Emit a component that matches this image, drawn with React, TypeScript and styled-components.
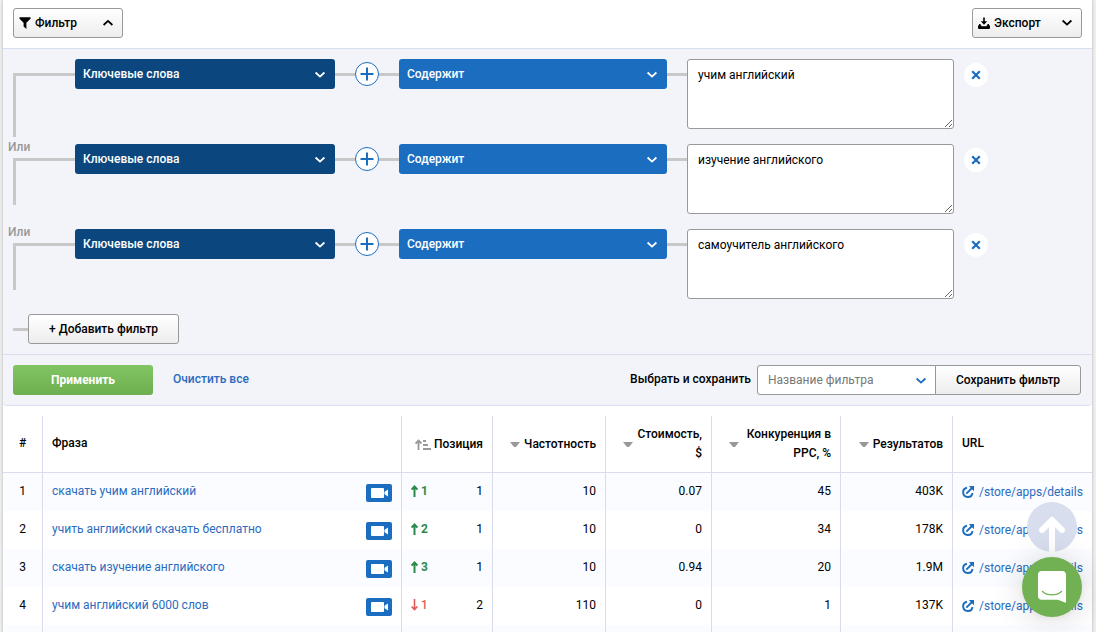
import React from 'react';
import styled, { createGlobalStyle, css } from 'styled-components';

const GlobalStyle = createGlobalStyle`
  *, *::before, *::after { box-sizing: border-box; }
  body {
    margin: 0;
    background: #efefef;
    color: #000;
    font: 400 12px/18px Roboto, "Liberation Sans", sans-serif;
  }
  button, select, textarea { font: inherit; color: inherit; margin: 0; }
  a { color: #2a6bbf; text-decoration: none; }
`;

const Page = styled.main`
  height: 100vh;
  overflow: hidden;
  padding: 0 4px 0 3px;
`;

const Panel = styled.div`
  min-height: 100vh;
  background: #fff;
  box-shadow: 0 0 3px rgba(0, 0, 0, 0.25);
`;

const Toolbar = styled.header`
  display: flex;
  justify-content: space-between;
  padding: 8px 10px 10px;
  border-bottom: 1px solid #d5dff0;
`;

const lightButton = css`
  height: 30px;
  border: 1px solid #999;
  border-radius: 3px;
  background: linear-gradient(#fff, #ededed);
  font-weight: 500;
`;

const ToolButton = styled.button`
  ${lightButton}
  display: flex;
  align-items: center;
  gap: 4px;
  width: 110px;
  padding: 0 8px 0 5px;

  svg:last-child { margin-left: auto; }
`;

const Filters = styled.section`
  background: #f3f4f9;
  padding-bottom: 10px;
  border-bottom: 1px solid #d5dff0;
`;

const FilterRow = styled.div`
  display: grid;
  grid-template-columns: 67px 260fr 64px 268fr 20px 267fr 34px;
  align-items: start;
  padding: 0 104px 0 5px;
`;

const Rail = styled.div<{ $first: boolean }>`
  height: ${(p) => (p.$first ? 80 : 85)}px;
  padding-top: ${(p) => (p.$first ? 24 : 10)}px;
`;

const OrLabel = styled.div`
  height: 15px;
  margin-bottom: 4px;
  line-height: 17px;
  font-weight: 500;
  color: #999;
`;

const Bracket = styled.div<{ $long: boolean }>`
  height: ${(p) => (p.$long ? 64 : 47)}px;
  margin-left: 5px;
  border: solid #c8c8c8;
  border-width: 3px 0 0 3px;
`;

const Slot = styled.div<{ $first: boolean }>`
  padding-top: ${(p) => (p.$first ? 10 : 15)}px;
`;

const SelectBox = styled.div`
  position: relative;

  svg {
    position: absolute;
    right: 9px;
    top: 12px;
    pointer-events: none;
  }
`;

const FilterSelect = styled.select<{ $dark?: boolean }>`
  display: block;
  appearance: none;
  width: 100%;
  height: 30px;
  padding: 0 30px 0 8px;
  border: 0;
  border-radius: 3px;
  background: ${(p) => (p.$dark ? '#0b467e' : '#1b6dc0')};
  color: #fff;
  font-weight: 500;
`;

const Joint = styled.div`
  display: flex;
  align-items: center;
  height: 30px;

  &::before, &:not(:empty)::after {
    content: '';
    flex: 1;
    height: 3px;
    background: #c8c8c8;
  }
`;

const RoundButton = styled.button<{ $outlined?: boolean }>`
  display: grid;
  place-items: center;
  width: 24px;
  height: 24px;
  padding: 0;
  border: ${(p) => (p.$outlined ? '1px solid #1b6dc0' : '0')};
  border-radius: 50%;
  background: #fff;
  color: #1b6dc0;
`;

const RemoveSlot = styled.div`
  padding: 4px 0 0 10px;
`;

const Words = styled.textarea`
  display: block;
  width: 100%;
  height: 70px;
  padding: 6px 10px;
  border: 1px solid #999;
  border-radius: 3px;
  background: #fff;
  resize: both;
`;

const AddRow = styled.div`
  display: flex;
  align-items: center;
  padding: 15px 10px 0;

  &::before {
    content: '';
    width: 15px;
    height: 3px;
    background: #c8c8c8;
  }
`;

const AddButton = styled.button`
  ${lightButton}
  padding: 0 20px;
`;

const Actions = styled.section`
  display: flex;
  align-items: center;
  padding: 10px 11px 10px 10px;
  background: #f3f4f9;
  border-bottom: 1px solid #d5dff0;
  border-radius: 0 0 4px 4px;
`;

const ApplyButton = styled.button`
  width: 140px;
  height: 30px;
  border: 0;
  border-radius: 3px;
  background: linear-gradient(#80c564, #6fae50);
  color: #fff;
  font-weight: 700;
`;

const ClearLink = styled.a`
  margin: 0 auto 0 20px;
  padding-bottom: 2px;
  font-weight: 500;
`;

const SaveLabel = styled.label`
  margin-right: 6px;
  padding-bottom: 2px;
  font-weight: 500;
`;

const PresetSelect = styled.select`
  display: block;
  appearance: none;
  width: 179px;
  height: 30px;
  padding: 0 30px 0 10px;
  border: 1px solid #999;
  border-radius: 3px 0 0 3px;
  background: #fff;
  color: #777;
`;

const SaveButton = styled.button`
  ${lightButton}
  width: 146px;
  margin-left: -1px;
  padding: 0;
  border-radius: 0 3px 3px 0;
`;

const Table = styled.table`
  width: 100%;
  margin-top: 10px;
  table-layout: fixed;
  border-collapse: separate;
  border-spacing: 0;
`;

const HeadCell = styled.th<{ $align?: 'left' | 'center' | 'right' }>`
  height: 57px;
  padding: ${(p) => (p.$align === 'right' ? '0 9px' : '0 9px 2px')};
  border-bottom: 1px solid #d8dcec;
  border-right: 1px solid #d8dcec;
  font-weight: 500;
  line-height: 19px;
  text-align: ${(p) => p.$align ?? 'left'};

  &:last-child { border-right: 0; }
`;

const SortHead = styled.div<{ $gap: number }>`
  display: flex;
  align-items: center;
  justify-content: flex-end;
  gap: ${(p) => p.$gap}px;

  svg { flex: none; }
`;

const Row = styled.tr`
  &:nth-child(odd) { background: #fafcff; }
`;

const Cell = styled.td<{ $align?: 'left' | 'center' | 'right' }>`
  height: 38px;
  padding: 9px 9px 0;
  vertical-align: top;
  border-right: 1px solid #d8dcec;
  white-space: nowrap;
  text-align: ${(p) => p.$align ?? 'right'};

  &:last-child { border-right: 0; }
`;

const Split = styled.div`
  display: flex;
  align-items: flex-start;
  justify-content: space-between;
`;

const VideoButton = styled.button`
  display: grid;
  place-items: center;
  width: 26px;
  height: 18px;
  margin-top: 2px;
  padding: 0;
  border: 0;
  border-radius: 2px;
  background: #1b6dc0;
`;

const Change = styled.span<{ $up: boolean }>`
  display: flex;
  align-items: center;
  gap: 3px;
  color: ${(p) => (p.$up ? '#2b8a4b' : '#dc5c5c')};
  font-weight: ${(p) => (p.$up ? 700 : 500)};
`;

const UrlLink = styled.a`
  display: flex;
  align-items: center;
  gap: 5px;
  margin-top: 1px;
`;

const TopButton = styled.button`
  position: fixed;
  right: 19px;
  bottom: 80px;
  width: 50px;
  height: 50px;
  padding: 0;
  border: 0;
  border-radius: 50%;
  overflow: hidden;
  background: #d8deed;
`;

const ChatButton = styled.button`
  position: fixed;
  right: 14px;
  bottom: 15px;
  display: grid;
  place-items: center;
  width: 60px;
  height: 60px;
  padding: 0;
  border: 0;
  border-radius: 50%;
  background: #71b153;
  box-shadow: 0 1px 6px rgba(0, 0, 0, 0.06), 0 2px 32px rgba(0, 0, 0, 0.16);
`;

const Chevron = ({ up, color = '#000' }: { up?: boolean; color?: string }) => (
  <svg width="12" height="8" viewBox="0 0 12 8" fill="none" stroke={color} strokeWidth="1.8" aria-hidden="true">
    <path d={up ? 'M1.600 6 6 1.900 10.400 6' : 'M1.600 1.500 6 5.600l4.400-4.100'} />
  </svg>
);

const FunnelIcon = () => (
  <svg width="12" height="12" viewBox="0 0 12 12" aria-hidden="true">
    <path d="M.5.300h11v1.500L7.400 5.800V12L4.600 9.500V5.800L.5 1.800z" />
  </svg>
);

const DownloadIcon = () => (
  <svg width="12" height="12" viewBox="0 0 12 12" aria-hidden="true">
    <path d="M5.200.5h1.600v3.800h2.400L6 7.800 2.800 4.300h2.400z" />
    <path d="M1.300 7h1L3.600 9.200h4.800L9.700 7h1L12 9.200V11a1 1 0 0 1-1 1H1a1 1 0 0 1-1-1V9.200z" />
  </svg>
);

const PlusIcon = () => (
  <svg width="14" height="14" viewBox="0 0 14 14" stroke="currentColor" strokeWidth="2" aria-hidden="true">
    <path d="M7 .5v13M.5 7h13" />
  </svg>
);

const CrossIcon = () => (
  <svg width="10" height="10" viewBox="0 0 10 10" stroke="currentColor" strokeWidth="2.200" aria-hidden="true">
    <path d="m1.200 1.200 7.600 7.600M8.800 1.200 1.200 8.800" />
  </svg>
);

const TriangleIcon = () => (
  <svg width="10" height="6" viewBox="0 0 10 6" fill="#999" aria-hidden="true">
    <path d="M0 1h10L6 6H4z" />
  </svg>
);

const SortIcon = () => (
  <svg width="16" height="11" viewBox="0 0 16 11" fill="none" stroke="#999" aria-hidden="true">
    <path strokeWidth="1.800" d="M3.500 11V1.500M.6 4.500l2.900-3 2.900 3" />
    <path strokeWidth="2" d="M8 2h3M8 6h5M8 10h8" />
  </svg>
);

const VideoIcon = () => (
  <svg width="18" height="10" viewBox="0 0 18 10" fill="#fff" aria-hidden="true">
    <rect x="1" width="13" height="10" rx="1" />
    <path d="M14.500 3.800 18 1.500v7l-3.500-2.300z" />
  </svg>
);

const ArrowIcon = ({ up }: { up: boolean }) => (
  <svg width="7" height="12" viewBox="0 0 7 12" fill="none" stroke="currentColor" strokeWidth={up ? 2 : 1.6} aria-hidden="true">
    <path d={up ? 'M3.500 12V1.500M.6 4.500l2.900-3 2.900 3' : 'M3.500 0v10.500M.6 7.500l2.900 3 2.900-3'} />
  </svg>
);

const ExternalIcon = () => (
  <svg width="12" height="12" viewBox="0 0 12 12" fill="none" stroke="#1b6dc0" strokeWidth="1.900" aria-hidden="true">
    <path d="M5 1.700A4.700 4.700 0 1 0 10.500 7" />
    <path d="M4.300 7.700 10 2" />
    <path d="M6.800 0H12v5.200z" fill="#1b6dc0" stroke="none" />
  </svg>
);

const TopIcon = () => (
  <svg width="50" height="50" viewBox="0 0 50 50" fill="none" stroke="#fff" strokeWidth="6" strokeLinecap="round" strokeLinejoin="round" aria-hidden="true">
    <path d="M25 53V19M15 28l10-10 10 10" />
  </svg>
);

const ChatIcon = () => (
  <svg width="28" height="32" viewBox="0 0 28 32" aria-hidden="true">
    <path fill="#fff" d="M28 32s-4.700-1.900-8.300-3.200H3.500C1.600 28.800 0 27.200 0 25.200V3.600C0 1.600 1.600 0 3.500 0h21C26.400 0 28 1.600 28 3.600z" />
    <path fill="none" stroke="#71b153" strokeWidth="1.400" strokeLinecap="round" d="M4.500 20.500c5 4.500 14 4.500 19 0" />
  </svg>
);

const filters = ['учим английский', 'изучение английского', 'самоучитель английского'];

const phrases = [
  { phrase: 'скачать учим английский', delta: 1, up: true, position: 1, volume: 10, cost: '0.07', competition: 45, results: '403K' },
  { phrase: 'учить английский скачать бесплатно', delta: 2, up: true, position: 1, volume: 10, cost: '0', competition: 34, results: '178K' },
  { phrase: 'скачать изучение английского', delta: 3, up: true, position: 1, volume: 10, cost: '0.94', competition: 20, results: '1.9M' },
  { phrase: 'учим английский 6000 слов', delta: 1, up: false, position: 2, volume: 110, cost: '0', competition: 1, results: '137K' },
];

const columnWidths = [40, undefined, 91, 113, 106, 129, 112, 139];

export default function App() {
  return (
    <>
      <GlobalStyle />
      <Page>
        <Panel>
          <Toolbar>
            <ToolButton type="button" aria-expanded="true">
              <FunnelIcon />
              Фильтр
              <Chevron up />
            </ToolButton>
            <ToolButton type="button">
              <DownloadIcon />
              Экспорт
              <Chevron />
            </ToolButton>
          </Toolbar>

          <Filters>
            {filters.map((text, i) => {
              const first = i === 0;
              return (
                <FilterRow key={text}>
                  <Rail $first={first}>
                    {!first && <OrLabel>Или</OrLabel>}
                    <Bracket $long={first} />
                  </Rail>
                  <Slot $first={first}>
                    <SelectBox>
                      <FilterSelect $dark aria-label="Поле">
                        <option>Ключевые слова</option>
                      </FilterSelect>
                      <Chevron color="#fff" />
                    </SelectBox>
                  </Slot>
                  <Slot $first={first}>
                    <Joint>
                      <RoundButton $outlined type="button" aria-label="Добавить условие">
                        <PlusIcon />
                      </RoundButton>
                    </Joint>
                  </Slot>
                  <Slot $first={first}>
                    <SelectBox>
                      <FilterSelect aria-label="Условие">
                        <option>Содержит</option>
                      </FilterSelect>
                      <Chevron color="#fff" />
                    </SelectBox>
                  </Slot>
                  <Slot $first={first}>
                    <Joint />
                  </Slot>
                  <Slot $first={first}>
                    <Words aria-label="Значение" defaultValue={text} spellCheck={false} />
                  </Slot>
                  <Slot $first={first}>
                    <RemoveSlot>
                      <RoundButton type="button" aria-label="Удалить">
                        <CrossIcon />
                      </RoundButton>
                    </RemoveSlot>
                  </Slot>
                </FilterRow>
              );
            })}
            <AddRow>
              <AddButton type="button">+ Добавить фильтр</AddButton>
            </AddRow>
          </Filters>

          <Actions>
            <ApplyButton type="button">Применить</ApplyButton>
            <ClearLink href="#clear">Очистить все</ClearLink>
            <SaveLabel htmlFor="preset">Выбрать и сохранить</SaveLabel>
            <SelectBox>
              <PresetSelect id="preset">
                <option>Название фильтра</option>
              </PresetSelect>
              <Chevron color="#1b6dc0" />
            </SelectBox>
            <SaveButton type="button">Сохранить фильтр</SaveButton>
          </Actions>

          <Table>
            <colgroup>
              {columnWidths.map((width, i) => (
                <col key={i} width={width} />
              ))}
            </colgroup>
            <thead>
              <tr>
                <HeadCell $align="center">#</HeadCell>
                <HeadCell>Фраза</HeadCell>
                <HeadCell $align="right"><SortHead $gap={3}><SortIcon />Позиция</SortHead></HeadCell>
                <HeadCell $align="right"><SortHead $gap={4}><TriangleIcon />Частотность</SortHead></HeadCell>
                <HeadCell $align="right"><SortHead $gap={4}><TriangleIcon /><span>Стоимость,<br />$</span></SortHead></HeadCell>
                <HeadCell $align="right"><SortHead $gap={8}><TriangleIcon /><span>Конкуренция в<br />PPC, %</span></SortHead></HeadCell>
                <HeadCell $align="right"><SortHead $gap={4}><TriangleIcon />Результатов</SortHead></HeadCell>
                <HeadCell>URL</HeadCell>
              </tr>
            </thead>
            <tbody>
              {phrases.map((item, i) => (
                <Row key={item.phrase}>
                  <Cell $align="center">{i + 1}</Cell>
                  <Cell>
                    <Split>
                      <a href="#phrase">{item.phrase}</a>
                      <VideoButton type="button" aria-label="Видео"><VideoIcon /></VideoButton>
                    </Split>
                  </Cell>
                  <Cell>
                    <Split>
                      <Change $up={item.up}><ArrowIcon up={item.up} />{item.delta}</Change>
                      {item.position}
                    </Split>
                  </Cell>
                  <Cell>{item.volume}</Cell>
                  <Cell>{item.cost}</Cell>
                  <Cell>{item.competition}</Cell>
                  <Cell>{item.results}</Cell>
                  <Cell>
                    <UrlLink href="#details"><ExternalIcon />/store/apps/details</UrlLink>
                  </Cell>
                </Row>
              ))}
              <Row>
                {columnWidths.map((_, i) => (
                  <Cell key={i} />
                ))}
              </Row>
            </tbody>
          </Table>
        </Panel>
      </Page>
      <TopButton type="button" aria-label="Наверх"><TopIcon /></TopButton>
      <ChatButton type="button" aria-label="Чат"><ChatIcon /></ChatButton>
    </>
  );
}
